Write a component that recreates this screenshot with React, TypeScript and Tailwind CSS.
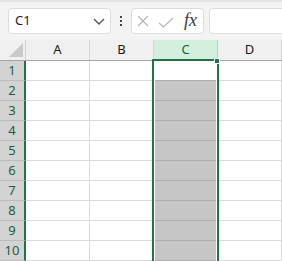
const COLS = ["A", "B", "C", "D"];
const ROWS = [1, 2, 3, 4, 5, 6, 7, 8, 9, 10];

const font = { fontFamily: '"Segoe UI", "Noto Sans", sans-serif' };

function FormulaBar() {
  return (
    <div className="flex h-[40px] items-start border-t-[2px] border-solid border-[#e4e4e4] bg-[#f3f3f3] pt-[6px]">
      {/* name box */}
      <div className="ml-[8px] flex h-[26px] w-[103px] items-center justify-between rounded-[4px] border border-solid border-[#dcdcdc] bg-white pl-[6px] pr-[5px]">
        <span className="text-[13px] text-[#1f1f1f]">C1</span>
        <svg width="12" height="7" viewBox="0 0 12 7">
          <path d="M1 1 L6 6 L11 1" stroke="#555" strokeWidth="1.4" fill="none" />
        </svg>
      </div>
      {/* more dots */}
      <div className="flex h-[26px] w-[20px] flex-col items-center justify-center gap-[2px]">
        <span className="h-[2px] w-[2px] bg-[#444]" />
        <span className="h-[2px] w-[2px] bg-[#444]" />
        <span className="h-[2px] w-[2px] bg-[#444]" />
      </div>
      {/* cancel / enter / fx */}
      <div className="flex h-[26px] w-[73px] items-center rounded-[4px] border border-solid border-[#dcdcdc] bg-white">
        <svg width="12" height="12" viewBox="0 0 12 12" className="ml-[5px]">
          <path d="M1 1 L11 11 M11 1 L1 11" stroke="#b4b4b4" strokeWidth="1.1" fill="none" />
        </svg>
        <svg width="16" height="11" viewBox="0 0 16 11" className="ml-[9px] mt-[3px]">
          <path d="M1 6 L5.5 10 L15 1" stroke="#b4b4b4" strokeWidth="1.1" fill="none" />
        </svg>
        <span
          className="ml-[10px] mt-[-2px] text-[18px] italic leading-none text-[#3a3a3a]"
          style={{ fontFamily: '"Liberation Serif", serif' }}>
          fx
        </span>
      </div>
      {/* formula input */}
      <div className="ml-[5px] mr-[-12px] h-[26px] grow rounded-[4px] border border-solid border-[#dcdcdc] bg-white" />
    </div>
  );
}

function Cell({ className }: { className: string }) {
  return <div className={"h-[20px] border-r border-b border-solid " + className} />;
}

function Grid() {
  return (
    <div className="relative">
      {/* header row */}
      <div className="grid h-[21px] grid-cols-[26px_64px_64px_64px_64px] border-b border-solid border-[#a6a6a6] bg-[#f0f0f0]">
        <div className="relative border-r border-solid border-[#d0d0d0]">
          <svg width="14" height="14" viewBox="0 0 14 14" className="absolute left-[9px] top-[3px]">
            <path d="M14 0 L14 14 L0 14 Z" fill="#c9c9c9" />
          </svg>
        </div>
        {COLS.map((c) => (
          <div
            key={c}
            className={
              c === "C"
                ? "flex items-center justify-center border-r border-solid border-[#c8c8c8] bg-[#d3efde] text-[13px] text-[#1b5e3b]"
                : "flex items-center justify-center border-r border-solid border-[#d6d6d6] text-[13px] text-[#1a1a1a]"
            }>
            {c}
          </div>
        ))}
      </div>
      {/* rows */}
      {ROWS.map((r) => (
        <div key={r} className="grid grid-cols-[26px_64px_64px_64px_64px]">
          <div className="flex h-[20px] items-center justify-center border-r-[2px] border-b border-solid border-r-[#217346] border-b-[#bcbcbc] bg-[#d3d3d3] text-[13px] text-[#1b5e3b]">
            {r}
          </div>
          <Cell className="border-[#dadada] bg-white" />
          <Cell className="border-[#dadada] bg-white" />
          <Cell
            className={
              r === 1
                ? "border-r-[#dadada] border-b-[#adadad] bg-white"
                : "border-r-[#dadada] border-b-[#adadad] bg-[#c6c6c6]"
            }
          />
          <Cell className="border-[#dadada] bg-white" />
        </div>
      ))}
      {/* selection outline */}
      <div className="pointer-events-none absolute left-[152px] top-[19px] h-[240px] w-[67px] border-2 border-solid border-[#217346] shadow-[inset_0_0_0_1px_#ffffff]" />
      <div className="pointer-events-none absolute left-[214px] top-[18px] h-[6px] w-[6px] border border-solid border-white bg-[#217346]" />
    </div>
  );
}

export default function App() {
  return (
    <div className="h-[261px] w-[282px] overflow-hidden bg-white" style={font}>
      <FormulaBar />
      <Grid />
    </div>
  );
}
